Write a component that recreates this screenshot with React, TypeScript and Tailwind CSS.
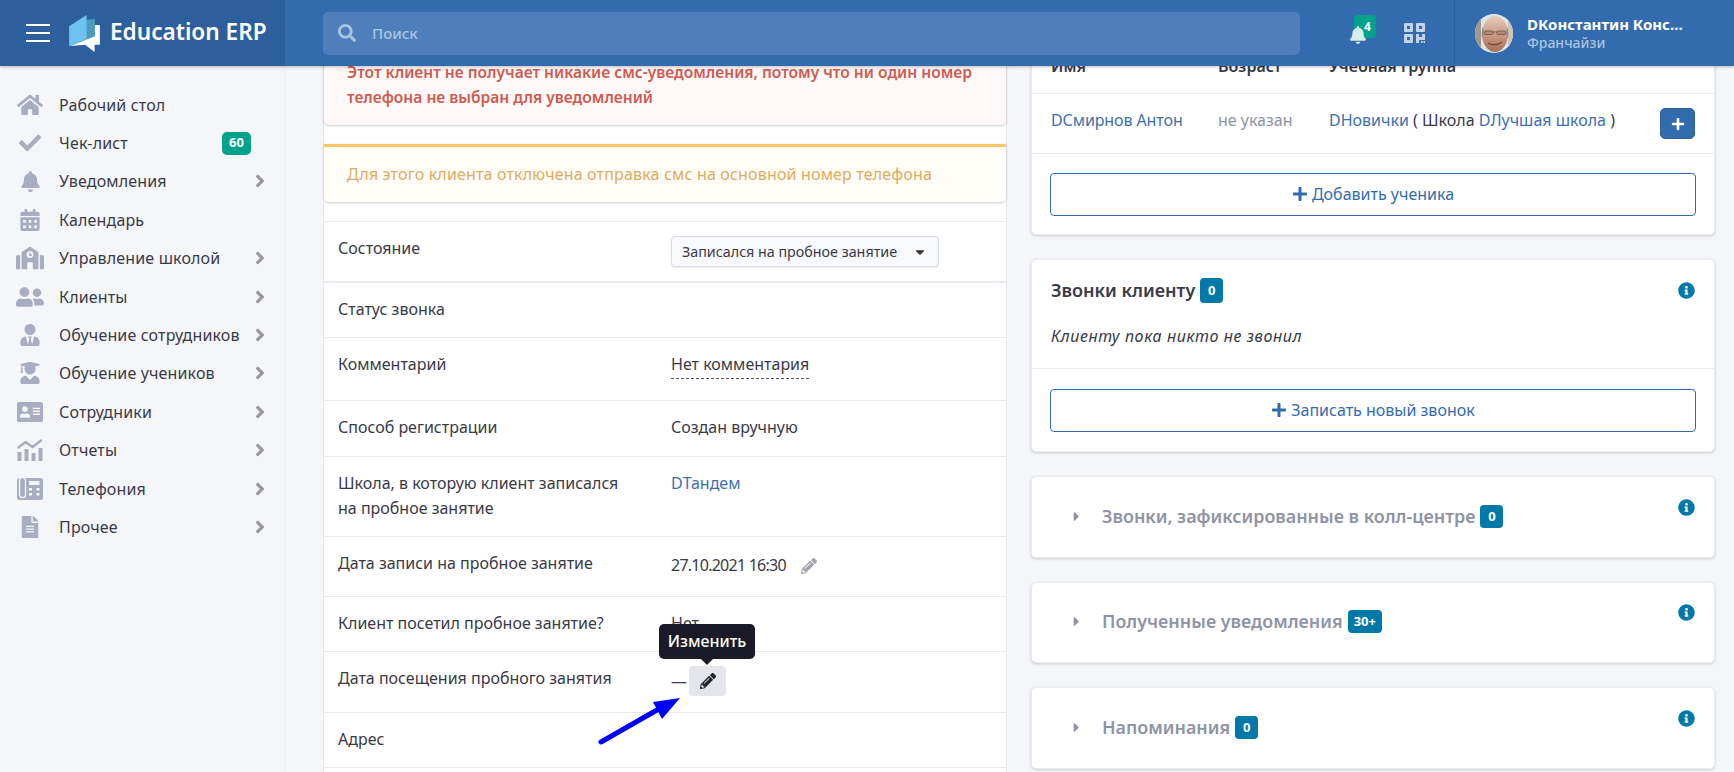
import React from "react";
import {
  FaHome, FaCheck, FaBell, FaCalendarAlt, FaSchool, FaUserFriends, FaUserTie, FaUserGraduate,
  FaAddressCard, FaFileAlt, FaAngleRight, FaSearch, FaPlus, FaInfoCircle, FaCaretRight, FaPencilAlt, FaCaretDown,
} from "react-icons/fa";

function ChartIcon() {
  return (
    <svg viewBox="0 0 26 22" width="26" height="22" fill="#a9adc1">
      <rect x="0.5" y="13" width="4" height="9" rx="0.6" />
      <rect x="7.5" y="10" width="4" height="12" rx="0.6" />
      <rect x="14.5" y="14" width="4" height="8" rx="0.6" />
      <rect x="21.5" y="9" width="4" height="13" rx="0.6" />
      <path d="M1.5 8.5 L8.5 3 L15.5 8 L24 1.5" stroke="#a9adc1" strokeWidth="2.4" fill="none" strokeLinecap="round" strokeLinejoin="round" />
    </svg>
  );
}

function PhoneOfficeIcon() {
  return (
    <svg viewBox="0 0 26 22" width="26" height="22">
      <rect x="0" y="0" width="26" height="22" rx="2.5" fill="#a9adc1" />
      <rect x="2.5" y="-0.5" width="6" height="20" rx="2.5" fill="#a9adc1" stroke="#f5f6f9" strokeWidth="1.3" />
      <rect x="12" y="3" width="10.5" height="4" fill="#f5f6f9" />
      <g fill="#f5f6f9">
        <rect x="12" y="10" width="3" height="2.6" />
        <rect x="19.5" y="10" width="3" height="2.6" />
        <rect x="12" y="15" width="3" height="2.6" />
        <rect x="19.5" y="15" width="3" height="2.6" />
      </g>
    </svg>
  );
}

const menu: { icon: React.ReactNode; label: string; arrow?: boolean; badge?: string }[] = [
  { icon: <FaHome size={26} />, label: "Рабочий стол" },
  { icon: <FaCheck size={22} />, label: "Чек-лист", badge: "60" },
  { icon: <FaBell size={21} />, label: "Уведомления", arrow: true },
  { icon: <FaCalendarAlt size={22} />, label: "Календарь" },
  { icon: <FaSchool size={28} />, label: "Управление школой", arrow: true },
  { icon: <FaUserFriends size={28} />, label: "Клиенты", arrow: true },
  { icon: <FaUserTie size={22} />, label: "Обучение сотрудников", arrow: true },
  { icon: <FaUserGraduate size={22} />, label: "Обучение учеников", arrow: true },
  { icon: <FaAddressCard size={26} />, label: "Сотрудники", arrow: true },
  { icon: <ChartIcon />, label: "Отчеты", arrow: true },
  { icon: <PhoneOfficeIcon />, label: "Телефония", arrow: true },
  { icon: <FaFileAlt size={22} />, label: "Прочее", arrow: true },
];

function Logo() {
  return (
    <svg viewBox="57 28 93 112" width="31" height="37">
      <path d="M62 122 L105 118 L134 140 L134 118 L150 118 L150 58 L100 58 Z" fill="#ffffff" />
      <path d="M110 42 L135 40 L135 92 L60 122 Z" fill="#4a9cbc" />
      <path d="M57 62 L110 28 L110 100 L57 122 Z" fill="#6fc1ef" />
    </svg>
  );
}

function QrIcon() {
  return (
    <svg viewBox="0 0 21 20" width="21" height="20" fill="#c3d4ea">
      <path fillRule="evenodd" d="M0 1a1 1 0 0 1 1-1h7a1 1 0 0 1 1 1v7a1 1 0 0 1-1 1H1a1 1 0 0 1-1-1zm3 2v3h3V3z" />
      <path fillRule="evenodd" d="M12 1a1 1 0 0 1 1-1h7a1 1 0 0 1 1 1v7a1 1 0 0 1-1 1h-7a1 1 0 0 1-1-1zm3 2v3h3V3z" />
      <path fillRule="evenodd" d="M0 12a1 1 0 0 1 1-1h7a1 1 0 0 1 1 1v7a1 1 0 0 1-1 1H1a1 1 0 0 1-1-1zm3 2v3h3v-3z" />
      <path d="M12 11h3v3h3v-3h3v6h-6v3h-3zM17 18h1.500v2H17zM19.500 18H21v2h-1.500z" />
    </svg>
  );
}

function Avatar() {
  return (
    <svg viewBox="0 0 38 39" width="38" height="39" className="rounded-full">
      <defs>
        <linearGradient id="face" x1="0" y1="0" x2="0" y2="1">
          <stop offset="0" stopColor="#e4cdbd" />
          <stop offset="0.45" stopColor="#cf9f87" />
          <stop offset="1" stopColor="#a8705a" />
        </linearGradient>
      </defs>
      <rect width="38" height="39" fill="#e1e3e4" />
      <rect x="0" y="0" width="6" height="39" fill="#9c9a8e" />
      <rect x="33" y="0" width="5" height="39" fill="#c9c5bb" />
      <ellipse cx="20" cy="20" rx="13" ry="18" fill="url(#face)" />
      <path d="M7 24 Q6 17 8 13 L9 20 Z M33 24 Q34 17 32 13 L31 20 Z" fill="#8f8a80" />
      <rect x="9.500" y="17" width="8.500" height="3.500" rx="1.200" fill="#b78a74" stroke="#5b4a42" strokeWidth="0.7" />
      <rect x="22" y="17" width="8.500" height="3.500" rx="1.200" fill="#b78a74" stroke="#5b4a42" strokeWidth="0.7" />
      <path d="M18 18 H22" stroke="#5b4a42" strokeWidth="0.7" />
      <path d="M13 29 Q20 33 27 28" stroke="#7a4638" strokeWidth="1.4" fill="none" />
    </svg>
  );
}

function Row({ h, label, children, thick }: { h: string; label: React.ReactNode; children?: React.ReactNode; thick?: boolean }) {
  return (
    <div className={`${h} ${thick ? "border-b-2" : "border-b"} border-[#e9ebf0] flex pt-[14px] pl-[14px] leading-[25px]`}>
      <div className="w-[333px] shrink-0">{label}</div>
      <div className="flex-1 min-w-0">{children}</div>
    </div>
  );
}

function Badge({ children, tall }: { children: React.ReactNode; tall?: boolean }) {
  return (
    <span className={`inline-flex items-center justify-center ${tall ? "h-[25px] min-w-[23px]" : "h-[23px] min-w-[23px]"} px-[6px] rounded-[4px] bg-[#0079a8] text-white text-[13px] font-bold leading-none`}>
      {children}
    </span>
  );
}

function OutlineButton({ children }: { children: React.ReactNode }) {
  return (
    <div className="h-[43px] pb-[1px] rounded-[4px] border border-[#336baf] flex items-center justify-center gap-[4px] text-[#336baf]">
      <FaPlus size={16} />
      <span>{children}</span>
    </div>
  );
}

function Collapsed({ title, badge }: { title: string; badge: string }) {
  return (
    <div className="h-[81.5px] shrink-0 bg-white rounded-[5px] border border-[#ebecf0] shadow-[0_1px_3px_rgba(0,0,0,0.18)] flex justify-between pr-[19px]">
      <div className="flex items-center h-[78px] pl-[37px] gap-[5px]">
        <FaCaretRight size={15} className="text-[#8f93a5] mr-[13px]" />
        <span className="text-[17.9px] font-semibold text-[#8f93a5]">{title}</span>
        <Badge>{badge}</Badge>
      </div>
      <FaInfoCircle size={17} className="text-[#0079a8] mt-[21.5px]" />
    </div>
  );
}

export default function App() {
  return (
    <div className="h-screen w-full overflow-hidden flex flex-col bg-[#f5f6f9] text-[16px] text-[#3a3a48] font-['Noto_Sans',sans-serif]">
      <header className="h-[66px] shrink-0 flex relative z-10 shadow-[0_1px_3px_rgba(0,0,0,0.25)] bg-[#336baf]">
        <div className="w-[285px] shrink-0 bg-[#2e5f9d] flex items-center pl-[26px]">
          <div className="flex flex-col gap-[6px] w-[24px]">
            <span className="h-[2px] bg-white" />
            <span className="h-[2px] bg-white" />
            <span className="h-[2px] bg-white" />
          </div>
          <div className="ml-[19px]"><Logo /></div>
          <span className="ml-[10px] -mt-[3px] text-[22.6px] font-semibold text-white whitespace-nowrap">Education ERP</span>
        </div>
        <div className="flex-1 flex items-center pl-[38px] min-w-0">
          <div className="w-[977px] h-[43px] rounded-[5px] bg-[#4e7fba] flex items-center pl-[15px] text-[#a9c4e0]">
            <FaSearch size={18} />
            <span className="ml-[16px] text-[15px] font-medium">Поиск</span>
          </div>
          <div className="w-[154px] shrink-0 h-full flex items-center pl-[49px]">
            <div className="relative w-[27px] h-[26px]">
              <span className="absolute left-[5px] top-[-5px] w-[22px] h-[23px] rounded-[4px] bg-[#00a389] text-white text-[12px] font-bold flex items-center justify-center pl-[5px]">4</span>
              <FaBell size={18} className="absolute left-0 top-[6px] text-[#d3ede8]" />
            </div>
            <div className="ml-[28px]"><QrIcon /></div>
          </div>
          <div className="flex-1 h-full border-l border-[#2e5f9d] flex items-center pl-[20px] min-w-0">
            <Avatar />
            <div className="ml-[14px] leading-[20px]">
              <div className="text-white font-bold text-[15px] whitespace-nowrap">DКонстантин Конс...</div>
              <div className="text-[#a9c4e0] text-[14px] font-medium -mt-[1px]">Франчайзи</div>
            </div>
          </div>
        </div>
      </header>

      <div className="flex-1 flex min-h-0">
        <aside className="w-[285px] shrink-0 border-r border-[#eceef2] pt-[19.5px] tracking-[0.15px]">
          {menu.map((m) => (
            <div key={m.label} className="h-[38.4px] flex items-center pl-[15px] pr-[14px]">
              <span className="w-[30px] flex justify-center text-[#a9adc1]">{m.icon}</span>
              <span className="ml-[14px] flex-1 whitespace-nowrap">{m.label}</span>
              {m.badge && (
                <span className="mr-[19px] w-[29px] h-[23px] rounded-[5px] bg-[#00a389] text-white text-[13px] font-bold flex items-center justify-center">{m.badge}</span>
              )}
              {m.arrow && <FaAngleRight size={20} className="text-[#999999]" />}
            </div>
          ))}
        </aside>

        <main className="flex-1 overflow-hidden flex gap-[24px] pl-[38px] pr-[19px] min-w-0">
          <div className="w-[684px] shrink-0 -mt-[20px] bg-white border-l border-r border-[#e6e8ee]">
            <div className="h-[79px] bg-[#fff8f8] rounded-b-[5px] shadow-[0_1px_3px_rgba(0,0,0,0.2)] pt-[14px] pl-[23px] pr-[20px] leading-[25px] font-semibold text-[#cf5b50] text-[15.55px]">
              Этот клиент не получает никакие смс-уведомления, потому что ни один номер телефона не выбран для уведомлений
            </div>
            <div className="mt-[19px] h-[58px] bg-[#fffdf8] border-t-[3px] border-[#fbc766] rounded-b-[5px] shadow-[0_1px_3px_rgba(0,0,0,0.2)] pl-[23px] pt-[15px] leading-[25px] text-[#e0ab5e] tracking-[0.17px]">
              Для этого клиента отключена отправка смс на основной номер телефона
            </div>
            <div className="mt-[19px] border-t border-[#e9ebf0]">
              <Row h="h-[61px]" thick label="Состояние">
                <div className="w-[268px] h-[31px] rounded-[4px] border border-[#d8dae6] bg-[#f8f9fb] shadow-[0_1px_1px_rgba(0,0,0,0.08)] flex items-center pl-[10px] text-[14.3px]">
                  Записался на пробное занятие
                  <FaCaretDown size={14} className="ml-[16px] text-[#333]" />
                </div>
              </Row>
              <Row h="h-[55px]" label="Статус звонка" />
              <Row h="h-[63px]" label="Комментарий">
                <span className="inline-block border-b border-dashed border-[#555] pb-[1px]">Нет комментария</span>
              </Row>
              <Row h="h-[56px]" label="Способ регистрации">Создан вручную</Row>
              <Row h="h-[80px]" label={<div className="w-[300px]">Школа, в которую клиент записался на пробное занятие</div>}>
                <span className="text-[#3d6fb0]">DТандем</span>
              </Row>
              <Row h="h-[60px]" label="Дата записи на пробное занятие">
                <span className="flex items-center gap-[15px] pt-[2px]">
                  <span className="tracking-[-0.75px]">27.10.2021 16:30</span>
                  <FaPencilAlt size={16} className="text-[#a0a2ac]" />
                </span>
              </Row>
              <Row h="h-[55px]" label="Клиент посетил пробное занятие?">Нет</Row>
              <Row h="h-[61px]" label="Дата посещения пробного занятия">
                <div className="flex items-center">
                  <span>—</span>
                  <div className="relative ml-[2px] w-[37px] h-[30px] rounded-[4px] bg-[#e5e6ec] flex items-center justify-center">
                    <FaPencilAlt size={16} className="text-[#22232c]" />
                    <div className="absolute left-[-30px] bottom-[37px] w-[96px] h-[35px] rounded-[5px] bg-[#1a1b26] text-white font-medium flex items-center justify-center whitespace-nowrap">
                      Изменить
                      <span className="absolute left-[41px] -bottom-[6px] w-0 h-0 border-l-[7px] border-r-[7px] border-t-[7px] border-l-transparent border-r-transparent border-t-[#1a1b26]" />
                    </div>
                  </div>
                </div>
              </Row>
              <Row h="h-[55px]" label="Адрес" />
              <Row h="h-[55px]" label="" />
            </div>
          </div>

          <div className="w-[684px] shrink-0 -mt-[20px] flex flex-col gap-[24px]">
            <div className="h-[189px] shrink-0 bg-white rounded-b-[5px] border border-[#ebecf0] shadow-[0_1px_3px_rgba(0,0,0,0.18)]">
              <div className="h-[47px] border-b border-[#e9ebf0] grid grid-cols-[167px_111px_1fr] pl-[19px] pt-[7px] font-semibold leading-[25px]">
                <span>Имя</span><span>Возраст</span><span>Учебная группа</span>
              </div>
              <div className="h-[60px] border-b border-[#e9ebf0] grid grid-cols-[167px_111px_1fr_auto] pl-[19px] pr-[19px] pt-[14px] leading-[25px]">
                <span className="text-[#3d6fb0] tracking-[-0.1px]">DСмирнов Антон</span>
                <span className="text-[#8f93a5]">не указан</span>
                <span className="whitespace-nowrap"><span className="text-[#3d6fb0]">DНовички</span> ( Школа <span className="text-[#3d6fb0]">DЛучшая школа</span> )</span>
                <span className="w-[35px] h-[31px] rounded-[5px] bg-[#336baf] border border-[#2e5f9d] text-white flex items-center justify-center"><FaPlus size={14} /></span>
              </div>
              <div className="px-[18px] pt-[19px]"><OutlineButton>Добавить ученика</OutlineButton></div>
            </div>

            <div className="h-[193px] shrink-0 bg-white rounded-[5px] border border-[#ebecf0] shadow-[0_1px_3px_rgba(0,0,0,0.18)]">
              <div className="h-[109px] border-b border-[#e9ebf0] px-[19px] pt-[18px]">
                <div className="flex items-center justify-between h-[25px]">
                  <div className="flex items-center gap-[5px]">
                    <span className="text-[18px] font-semibold">Звонки клиенту</span>
                    <Badge tall>0</Badge>
                  </div>
                  <FaInfoCircle size={17} className="text-[#0079a8]" />
                </div>
                <div className="mt-[21px] italic leading-[25px] tracking-[0.6px]">Клиенту пока никто не звонил</div>
              </div>
              <div className="px-[18px] pt-[20px]"><OutlineButton>Записать новый звонок</OutlineButton></div>
            </div>

            <Collapsed title="Звонки, зафиксированные в колл-центре" badge="0" />
            <Collapsed title="Полученные уведомления" badge="30+" />
            <Collapsed title="Напоминания" badge="0" />
          </div>
        </main>
      </div>

      <svg viewBox="0 0 90 50" width="90" height="50" className="absolute left-[596px] top-[696px] z-20 pointer-events-none">
        <path d="M5 46 L68 10" stroke="#0000ff" strokeWidth="5" strokeLinecap="round" fill="none" />
        <path d="M84 2 L57 6 L66 23 Z" fill="#0000ff" />
      </svg>
    </div>
  );
}
